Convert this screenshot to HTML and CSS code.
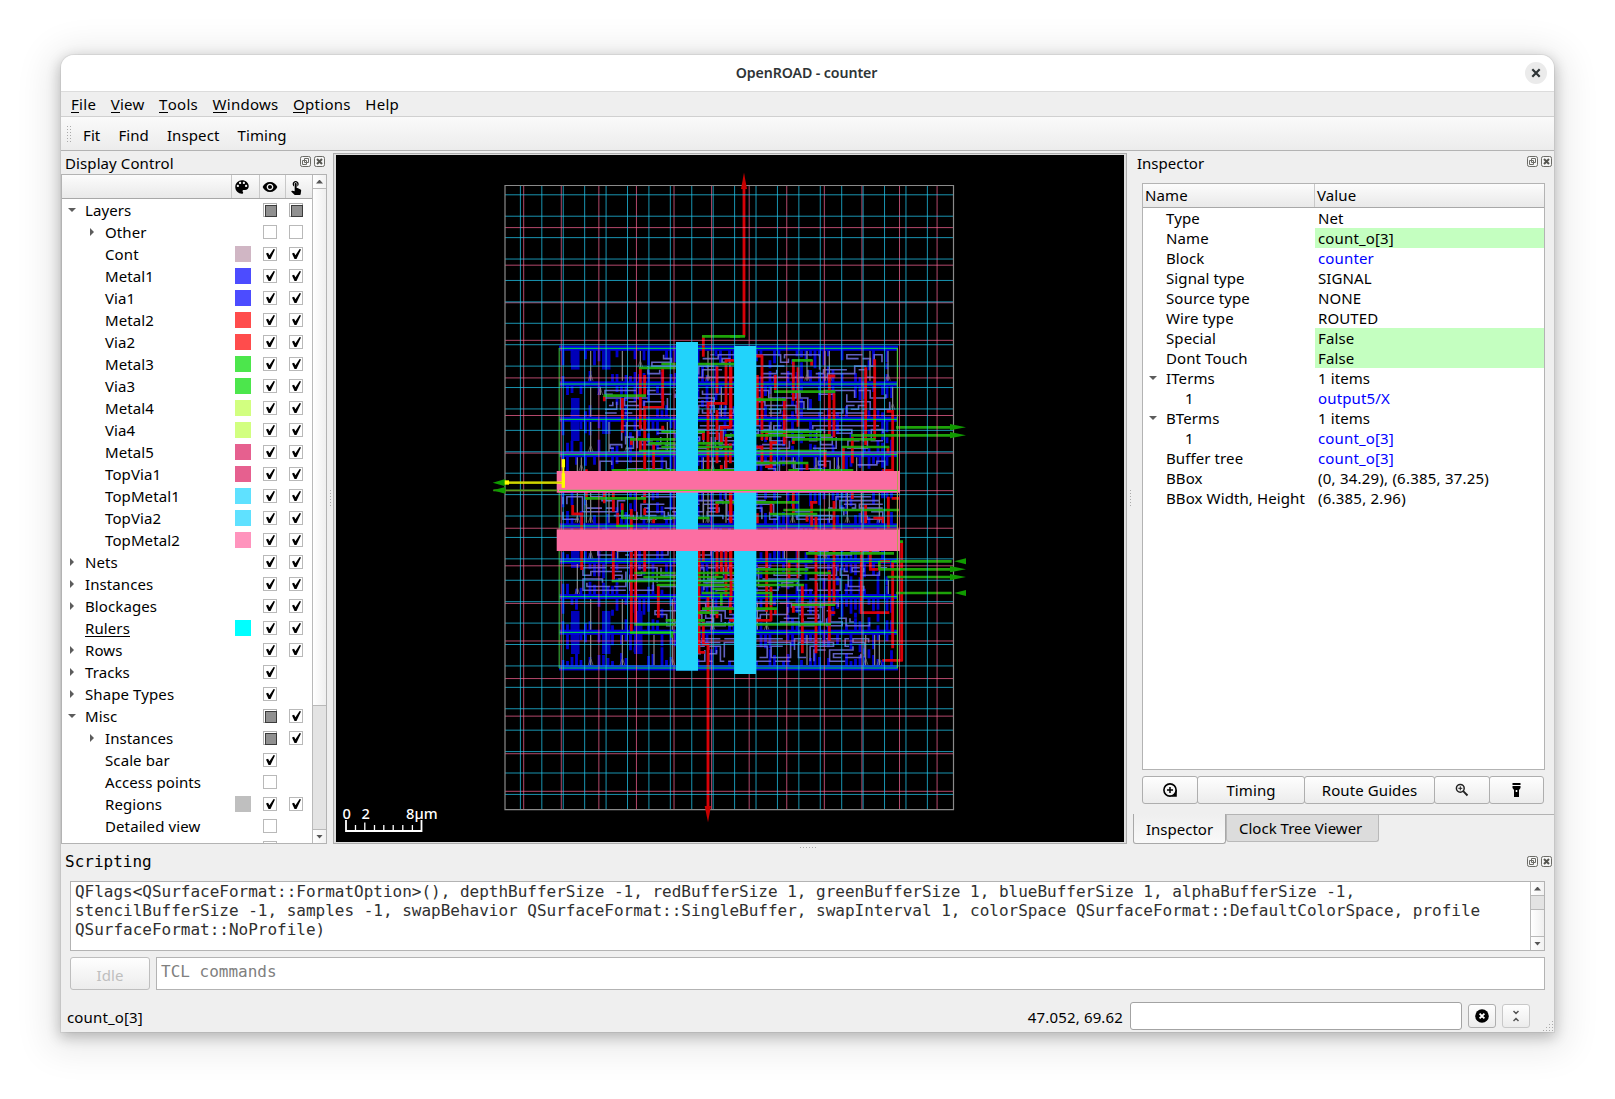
FILE: index.html
```html
<!DOCTYPE html>
<html lang="en">
<head>
<meta charset="utf-8">
<title>OpenROAD - counter</title>
<link rel="stylesheet" href="styles.css">
</head>
<body>
<svg class="defs" width="0" height="0">
  <symbol id="float" viewBox="0 0 11 11"><rect x=".5" y=".5" width="10" height="10" rx="1.8" fill="#f6f6f6" stroke="#6b6b66"/><path d="M4.5 2.5h4v4h-4zM2.5 4.5h4v4h-4z" fill="#f6f6f6" stroke="#6b6b66"/></symbol>
  <symbol id="shut" viewBox="0 0 11 11"><rect x=".5" y=".5" width="10" height="10" rx="1.8" fill="#f6f6f6" stroke="#6b6b66"/><path d="M3 3l5 5M8 3l-5 5" stroke="#55554f" stroke-width="2"/></symbol>
</svg>
<div class="window">
  <header class="titlebar"><span class="title">OpenROAD - counter</span>
    <span class="close"><svg width="10" height="10" viewBox="0 0 10 10"><path d="M1.3 1.3l7.4 7.4M8.7 1.3L1.3 8.7" stroke="#2e3436" stroke-width="2.2"/></svg></span>
  </header>
  <nav class="menubar"><span><u>F</u>ile</span><span><u>V</u>iew</span><span><u>T</u>ools</span><span><u>W</u>indows</span><span><u>O</u>ptions</span><span>Help</span></nav>
  <div class="toolbar"><i class="grip"></i><span>Fit</span><span>Find</span><span>Inspect</span><span>Timing</span></div>

  <main class="work">
    <section class="display">
      <div class="dock-title"><span>Display Control</span><svg><use href="#float"/></svg><svg><use href="#shut"/></svg></div>
      <div class="tree-box">
        <div class="tree">
          <div class="tree-head"><b></b>
            <b><svg width="18" height="18" viewBox="0 0 24 24"><path fill-rule="evenodd" d="M12 3c-4.97 0-9 4.03-9 9s4.03 9 9 9c.83 0 1.5-.67 1.5-1.5 0-.39-.15-.74-.39-1.01-.23-.26-.38-.61-.38-.99 0-.83.67-1.5 1.5-1.5H16c2.76 0 5-2.24 5-5 0-4.42-4.03-8-9-8zm-5.500 9c-.83 0-1.500-.67-1.500-1.500S5.670 9 6.500 9 8 9.670 8 10.500 7.330 12 6.500 12zm3-4C8.670 8 8 7.330 8 6.500S8.670 5 9.500 5s1.500.67 1.500 1.500S10.330 8 9.500 8zm5 0c-.83 0-1.500-.67-1.500-1.500S13.670 5 14.500 5s1.500.67 1.500 1.500S15.330 8 14.500 8zm3 4c-.83 0-1.500-.67-1.500-1.500S16.670 9 17.500 9s1.500.67 1.500 1.500-.67 1.500-1.500 1.500z"/></svg></b>
            <b><svg width="16" height="16" viewBox="0 0 24 24"><path d="M12 4.500C7 4.500 2.730 7.610 1 12c1.730 4.390 6 7.500 11 7.500s9.270-3.110 11-7.500c-1.730-4.390-6-7.500-11-7.500zM12 17c-2.760 0-5-2.240-5-5s2.240-5 5-5 5 2.240 5 5-2.240 5-5 5zm0-8c-1.660 0-3 1.340-3 3s1.340 3 3 3 3-1.340 3-3-1.340-3-3-3z"/></svg></b>
            <b><svg width="16" height="16" viewBox="0 0 24 24"><path d="M9 11.240V7.500C9 6.120 10.120 5 11.500 5S14 6.120 14 7.500v3.740c1.210-.81 2-2.180 2-3.740C16 5.010 13.990 3 11.500 3S7 5.010 7 7.500c0 1.560.79 2.930 2 3.740zm9.840 4.630l-4.540-2.260c-.17-.07-.35-.11-.54-.11H13v-6c0-.83-.67-1.500-1.500-1.500S10 6.670 10 7.500v10.740l-3.430-.72c-.08-.01-.15-.03-.24-.03-.31 0-.59.13-.79.33l-.79.8 4.940 4.940c.27.27.65.44 1.060.44h6.790c.75 0 1.330-.55 1.440-1.280l.75-5.270c.01-.07.02-.14.02-.2 0-.62-.38-1.160-.91-1.380z"/></svg></b>
          </div>
          <div class="row open"><span>Layers</span><i></i><em class="mid"></em><em class="mid"></em></div>
          <div class="row sub shut"><span>Other</span><i></i><em></em><em></em></div>
          <div class="row sub"><span>Cont</span><i class="cont"></i><em class="on"></em><em class="on"></em></div>
          <div class="row sub"><span>Metal1</span><i class="m1"></i><em class="on"></em><em class="on"></em></div>
          <div class="row sub"><span>Via1</span><i class="m1"></i><em class="on"></em><em class="on"></em></div>
          <div class="row sub"><span>Metal2</span><i class="m2"></i><em class="on"></em><em class="on"></em></div>
          <div class="row sub"><span>Via2</span><i class="m2"></i><em class="on"></em><em class="on"></em></div>
          <div class="row sub"><span>Metal3</span><i class="m3"></i><em class="on"></em><em class="on"></em></div>
          <div class="row sub"><span>Via3</span><i class="m3"></i><em class="on"></em><em class="on"></em></div>
          <div class="row sub"><span>Metal4</span><i class="m4"></i><em class="on"></em><em class="on"></em></div>
          <div class="row sub"><span>Via4</span><i class="m4"></i><em class="on"></em><em class="on"></em></div>
          <div class="row sub"><span>Metal5</span><i class="m5"></i><em class="on"></em><em class="on"></em></div>
          <div class="row sub"><span>TopVia1</span><i class="m5"></i><em class="on"></em><em class="on"></em></div>
          <div class="row sub"><span>TopMetal1</span><i class="tm1"></i><em class="on"></em><em class="on"></em></div>
          <div class="row sub"><span>TopVia2</span><i class="tm1"></i><em class="on"></em><em class="on"></em></div>
          <div class="row sub"><span>TopMetal2</span><i class="tm2"></i><em class="on"></em><em class="on"></em></div>
          <div class="row shut"><span>Nets</span><i></i><em class="on"></em><em class="on"></em></div>
          <div class="row shut"><span>Instances</span><i></i><em class="on"></em><em class="on"></em></div>
          <div class="row shut"><span>Blockages</span><i></i><em class="on"></em><em class="on"></em></div>
          <div class="row"><span><u>Rulers</u></span><i class="ruler"></i><em class="on"></em><em class="on"></em></div>
          <div class="row shut"><span>Rows</span><i></i><em class="on"></em><em class="on"></em></div>
          <div class="row shut"><span>Tracks</span><i></i><em class="on"></em></div>
          <div class="row shut"><span>Shape Types</span><i></i><em class="on"></em></div>
          <div class="row open"><span>Misc</span><i></i><em class="mid"></em><em class="on"></em></div>
          <div class="row sub shut"><span>Instances</span><i></i><em class="mid"></em><em class="on"></em></div>
          <div class="row sub"><span>Scale bar</span><i></i><em class="on"></em></div>
          <div class="row sub"><span>Access points</span><i></i><em></em></div>
          <div class="row sub"><span>Regions</span><i class="region"></i><em class="on"></em><em class="on"></em></div>
          <div class="row sub"><span>Detailed view</span><i></i><em></em></div>
          <div class="row sub"><span>Highlight sel…</span><i></i><em class="on"></em></div>
        </div>
        <div class="scroll"><b class="up"></b><div class="thumb tall"></div><div class="track"></div><b class="down"></b></div>
      </div>
    </section>

    <div class="vsplit"><i class="dots-v"></i></div>

    <section class="layout">
      <svg id="chip" width="788" height="687" viewBox="336 155 788 687"></svg>
    </section>

    <div class="vsplit wide"><i class="dots-v"></i></div>

    <section class="inspector">
      <div class="dock-title"><span>Inspector</span><svg><use href="#float"/></svg><svg><use href="#shut"/></svg></div>
      <div class="props">
        <div class="props-head"><span>Name</span><span>Value</span></div>
        <div class="prop"><span>Type</span><span>Net</span></div>
        <div class="prop"><span>Name</span><span class="edit">count_o[3]</span></div>
        <div class="prop"><span>Block</span><span class="link">counter</span></div>
        <div class="prop"><span>Signal type</span><span>SIGNAL</span></div>
        <div class="prop"><span>Source type</span><span>NONE</span></div>
        <div class="prop"><span>Wire type</span><span>ROUTED</span></div>
        <div class="prop"><span>Special</span><span class="edit">False</span></div>
        <div class="prop"><span>Dont Touch</span><span class="edit">False</span></div>
        <div class="prop open"><span>ITerms</span><span>1 items</span></div>
        <div class="prop nested"><span>1</span><span class="link">output5/X</span></div>
        <div class="prop open"><span>BTerms</span><span>1 items</span></div>
        <div class="prop nested"><span>1</span><span class="link">count_o[3]</span></div>
        <div class="prop"><span>Buffer tree</span><span class="link">count_o[3]</span></div>
        <div class="prop"><span>BBox</span><span class="num">(0, 34.29), (6.385, 37.25)</span></div>
        <div class="prop"><span>BBox Width, Height</span><span class="num">(6.385, 2.96)</span></div>
      </div>
      <div class="actions">
        <button class="w56"><svg width="16" height="16" viewBox="0 0 16 16"><circle cx="8" cy="8" r="6.100" fill="none" stroke="#000" stroke-width="1.600"/><path d="M8 5v6M5 8h6" stroke="#000" stroke-width="1.500"/><path d="M14.800 8v6.800H8c3.500 0 6-3 6-6.800z"/></svg></button>
        <button class="w108">Timing</button>
        <button class="w131">Route Guides</button>
        <button class="w56"><svg width="16" height="16" viewBox="0 0 16 16" fill="none" stroke="#222"><circle cx="6.300" cy="6.300" r="3.900" stroke-width="1.500"/><path d="M9.200 9.200l4.300 4.300" stroke-width="1.900"/><path d="M6.300 4.300v4M4.300 6.300h4"/></svg></button>
        <button class="w55"><svg width="16" height="16" viewBox="0 0 16 16"><path d="M3.500 1h8v2h-8zM3.500 4h8v2L10 8v7H5V8L3.500 6z"/><path d="M6.700 8h1.600v2H6.700z" fill="#fff"/></svg></button>
      </div>
      <div class="tabs"><span class="tab current">Inspector</span><span class="tab">Clock Tree Viewer</span></div>
    </section>
  </main>

  <div class="hsplit"><i class="dots-h"></i></div>

  <section class="scripting">
    <div class="dock-title mono"><span>Scripting</span><svg><use href="#float"/></svg><svg><use href="#shut"/></svg></div>
    <div class="log">
      <pre>QFlags&lt;QSurfaceFormat::FormatOption&gt;(), depthBufferSize -1, redBufferSize 1, greenBufferSize 1, blueBufferSize 1, alphaBufferSize -1,
stencilBufferSize -1, samples -1, swapBehavior QSurfaceFormat::SingleBuffer, swapInterval 1, colorSpace QSurfaceFormat::DefaultColorSpace, profile
QSurfaceFormat::NoProfile)</pre>
      <div class="scroll"><b class="up"></b><div class="track small"></div><div class="thumb"></div><b class="down"></b></div>
    </div>
    <div class="command"><button class="idle" disabled>Idle</button><div class="tcl">TCL commands</div></div>
  </section>

  <footer class="status">
    <span class="picked">count_o[3]</span><span class="coords">47.052, 69.62</span>
    <div class="field"></div>
    <button><svg width="14" height="14" viewBox="0 0 14 14"><circle cx="7" cy="7" r="6.800"/><path d="M4.600 4.600l4.800 4.800M9.400 4.600L4.600 9.400" stroke="#fff" stroke-width="1.800"/></svg></button>
    <button class="dim"><svg width="8" height="12" viewBox="0 0 8 12"><path d="M1.500 1L4 3.500 6.500 1M1.500 11L4 8.500 6.500 11" fill="none" stroke="#555" stroke-width="1.500"/></svg></button>
    <i class="sizegrip"></i>
  </footer>
</div>
<script src="chip.js"></script>
</body>
</html>
```
FILE: styles.css
```css
* { box-sizing: border-box; }
body { margin: 0; width: 1615px; height: 1099px; overflow: hidden; background: #fff; color: #000; font: 15px/20px "Noto Sans", sans-serif; letter-spacing: .1px; }
.defs { display: block; height: 0; }
u { text-decoration: none; border-bottom: 1px solid #000; display: inline-block; line-height: 16px; }
i, em { font-style: normal; }

.window { width: 1493px; height: 977px; margin: 55px 0 0 61px; background: #efefef; border-radius: 13px 13px 0 0; display: flex; flex-direction: column; box-shadow: 0 0 0 1px rgba(0,0,0,.05), 0 4px 14px 1px rgba(0,0,0,.24), 0 6px 36px 12px rgba(0,0,0,.09); }
.titlebar { height: 37px; flex: none; background: #fff; border-bottom: 1px solid #dcdcdc; border-radius: 13px 13px 0 0; display: flex; align-items: center; padding: 0 7px 0 27px; }
.title { flex: 1; text-align: center; font-weight: 600; font-size: 14.200px; letter-spacing: -.1px; color: #2e3436; padding-bottom: 1px; }
.close { width: 22px; height: 22px; border-radius: 50%; background: #ebebeb; display: grid; place-items: center; }
.menubar { height: 25px; flex: none; border-bottom: 1px solid #d0d0d0; display: flex; gap: 14.500px; padding: 2px 0 0 10px; letter-spacing: .28px; }
.toolbar { height: 34px; flex: none; border-bottom: 1px solid #b3b3b3; background: linear-gradient(#fafafa, #ececec); display: flex; align-items: center; gap: 18px; padding: 3px 0 0 5px; }
.grip { width: 5px; height: 17px; margin: -4px -6px 0 0; background: radial-gradient(circle, #aaa 0.700px, transparent 1px) 0 0 / 3px 3px; }

.work { height: 693px; flex: none; display: flex; align-items: flex-start; }
.display { width: 266px; }
.dock-title { display: flex; align-items: center; height: 23px; padding: 1px 5px 0 4px; gap: 3px; }
.dock-title span { flex: 1; }
.dock-title svg { width: 11px; height: 11px; margin-top: -3px; }
.display .dock-title { padding-right: 2px; }
.tree-box { height: 670px; border: 1px solid #b3b3b3; background: #fff; display: flex; overflow: hidden; }
.tree { flex: 1; overflow: hidden; }
.tree-head { height: 24px; border-bottom: 1px solid #a8a8a8; background: linear-gradient(#fcfcfc, #e9e9e9); display: grid; grid-template-columns: 170px 28px 26px 26px; }
.tree-head b { border-right: 1px solid #c8c8c8; display: grid; align-items: center; overflow: hidden; padding-left: 1px; }
.tree-head b:nth-child(3) { padding-left: 2px; }
.tree-head b:nth-child(4) { border-right: 0; padding: 1px 0 0 2px; }
.row { height: 22px; display: grid; grid-template-columns: 173px 28px 26px 20px; grid-template-rows: 22px; align-items: center; }
.row span { position: relative; padding-left: 23px; line-height: 22px; height: 22px; white-space: nowrap; }
.row.sub span { padding-left: 43px; }
.row span::before, .prop span:first-child::before { content: ""; position: absolute; width: 8px; height: 8px; }
.row.open span::before { left: 6px; top: 7px; }
.row.shut span::before { left: 8px; top: 7px; height: 8px; width: 4px; background: #5c5c5c; clip-path: polygon(0 0, 100% 50%, 0 100%); }
.row.sub.shut span::before { left: 28px; }
.row.open span::before, .prop.open span:first-child::before { height: 4px; margin-top: 2px; background: #5c5c5c; clip-path: polygon(0 0, 100% 0, 50% 100%); }
.row i { width: 16px; height: 16px; }
.row em { width: 14px; height: 14px; border: 1px solid #b9b9b9; position: relative; background: #fff; }
.row em.on::after { content: ""; position: absolute; left: 2px; top: 1px; width: 9px; height: 10px; background: #000; clip-path: polygon(0 45%, 23% 38%, 38% 62%, 85% 0, 100% 6%, 50% 100%, 28% 100%); }
.row em.mid { border-color: #b0b0b0; }
.row em.mid::after { content: ""; position: absolute; left: 1px; top: 1px; width: 10px; height: 10px; border: 1px solid #3c3c3c; background: #909090; }
.cont { background: #d0b6c4; } .m1 { background: #4c4cff; } .m2 { background: #ff4c4c; } .m3 { background: #4ce64c; }
.m4 { background: #d2ff80; } .m5 { background: #e6608f; } .tm1 { background: #5fe1ff; } .tm2 { background: #ff94bd; }
.ruler { background: #0ff; } .region { background: #bfbfbf; }

.scroll { width: 14px; flex: none; border-left: 1px solid #b9b9b9; display: flex; flex-direction: column; background: #fcfcfc; }
.scroll b { height: 13px; flex: none; display: grid; place-items: center; background: linear-gradient(90deg, #fff, #f2f2f2); }
.scroll b::after { content: ""; width: 7px; height: 4px; background: #555; clip-path: polygon(50% 0, 100% 100%, 0 100%); }
.scroll .down::after { clip-path: polygon(0 0, 100% 0, 50% 100%); }
.thumb { flex: 1; border: solid #b9b9b9; border-width: 1px 0; background: linear-gradient(90deg, #fff, #efefef); }
.thumb.tall { flex: none; height: 518px; }
.track { flex: 1; background: #e3e3e3; border-bottom: 1px solid #b9b9b9; }
.track.small { flex: none; height: 14px; border: 0; border-top: 1px solid #b9b9b9; }

.vsplit { width: 6px; height: 693px; display: grid; place-items: center; padding-left: 1px; }
.vsplit.wide { width: 6px; }
.dots-v { width: 3px; height: 17px; background: radial-gradient(circle, #aaa 0.700px, transparent 1px) 0 0 / 3px 3px; }
.layout { width: 794px; height: 691px; margin-top: 2px; border: 1px solid #adadad; padding: 1px 1px 0 2px; background: #dedede; }
.layout svg { display: block; background: #000; }
.scale-label { fill: #fff; font-weight: 500; font-size: 14.670px; }

.inspector { width: 421px; display: flex; flex-direction: column; }
.inspector .dock-title { padding: 1px 2px 0 4px; letter-spacing: 0; }
.props { margin: 9px 9px 0 9px; height: 587px; border: 1px solid #b3b3b3; background: #fff; }
.props-head { height: 24px; border-bottom: 1px solid #a8a8a8; background: linear-gradient(#fcfcfc, #e9e9e9); display: grid; grid-template-columns: 172px 1fr; }
.props-head span { padding: 1px 0 0 2px; }
.props-head span:first-child { border-right: 1px solid #c8c8c8; }
.prop { height: 20px; display: grid; grid-template-columns: 172px 1fr; white-space: nowrap; }
.prop span { padding-left: 3px; position: relative; line-height: 20px; height: 20px; }
.prop span:first-child { padding-left: 23px; }
.prop.nested span:first-child { padding-left: 42px; }
.prop.open span:first-child::before { left: 6px; top: 6px; }
.prop .num { letter-spacing: .22px; }
.prop .edit { background: #c4ffc0; }
.prop .link { color: #00f; }
.prop .link, .prop .edit { letter-spacing: .15px; }
button { font: inherit; letter-spacing: inherit; color: #000; background: linear-gradient(#fefefe, #ececec); border: 1px solid #aeaeae; border-radius: 3px; padding: 0; display: grid; place-items: center; }
.actions { display: flex; margin: 6px 0 0 9px; }
.actions button { height: 28px; margin-right: -1px; }
.w56 { width: 56px; } .w108 { width: 108px; } .w131 { width: 131px; } .w55 { width: 55px; }
.tabs { display: flex; align-items: flex-start; margin-top: 10px; border-top: 1px solid #b3b3b3; height: 32px; letter-spacing: 0; }
.tab { height: 27px; padding: 3px 12px 0; border: 1px solid #b9b9b9; border-top: 0; border-radius: 0 0 3px 3px; background: #dcdcdc; white-space: nowrap; width: 153px; }
.tab.current { height: 30px; margin-top: -1px; padding-top: 5px; background: linear-gradient(#efefef, #f9f9f9); width: 93px; border-color: #a8a8a8; }

.hsplit { height: 6px; flex: none; display: grid; place-items: center; }
.dots-h { width: 18px; height: 3px; background: radial-gradient(circle, #aaa 0.700px, transparent 1px) 0 0 / 3px 3px; }
.scripting { flex: none; font-size: 16px; }
.mono, .log, .tcl { font-family: "DejaVu Sans Mono", monospace; font-size: 16px; letter-spacing: 0; }
.scripting .dock-title { height: 31px; padding: 0 2px 7px 4px; }
.scripting .dock-title svg { margin-top: -2px; }
.log { margin: 0 9px; height: 70px; border: 1px solid #b3b3b3; background: #fff; display: flex; color: #303030; }
.log pre { flex: 1; margin: 0; padding: 0 0 0 4px; font: inherit; letter-spacing: -.008px; line-height: 19px; overflow: hidden; }
.command { display: flex; gap: 6px; margin: 6px 9px 0; height: 33px; }
.idle { width: 80px; color: #bebebe; border-color: #bebebe; font-size: 15px; padding-top: 2px; }
.tcl { flex: 1; border: 1px solid #b3b3b3; background: #fff; color: #808080; padding: 4px; }
.status { flex: 1; display: flex; align-items: flex-end; padding: 0 1px 2px 6px; }
.picked { flex: 1; }
.picked, .coords { margin-bottom: 3px; letter-spacing: .15px; }
.field { width: 332px; height: 28px; margin-left: 7px; border: 1px solid #a3a3a3; border-radius: 3px; background: #fff; }
.status button { width: 28px; height: 24px; margin: 0 0 2px 6px; }
.status .dim { border-color: #c8c8c8; }
.sizegrip { width: 11px; height: 11px; margin: 0 0 -1px 12px; background: radial-gradient(circle, #aaa 0.700px, transparent 1px) 0 0 / 3px 3px; clip-path: polygon(100% 0, 100% 100%, 0 100%); }
```
FILE: chip.js
```js
// Draws the routed die. Detail shapes are listed per quadrant in third-of-a-pixel units.
const out = [];
const seg = (d, color, w, extra = '') => out.push(`<path d="${d}" fill="none" stroke="${color}" stroke-width="${w}" ${extra}/>`);
const box = (x, y, w, h, c, extra = '') => out.push(`<rect x="${x}" y="${y}" width="${w}" height="${h}" fill="${c}" ${extra}/>`);

let seed = 7;
const rnd = () => (seed = (seed * 16807) % 2147483647) / 2147483647;
const pick = (a, b) => a + Math.floor(rnd() * (b - a + 1));

const rails = [348.3, 384, 419.3, 454.7, 490.3, 526, 561.3, 596.7, 632.3, 668];

// metal1 stubs hanging off the power rails
let stubs = '';
rails.slice(0, 9).forEach((y, r) => {
  for (let x = 563; x < 895; x += 4.5) {
    if (rnd() < 0.5) stubs += `M${x} ${y + 2}v${pick(6, 15)}`;
    if (rnd() < 0.5) stubs += `M${x} ${rails[r + 1] - 2}v-${pick(5, 13)}`;
    if (x > 610 && rnd() < 0.25) stubs += `M${x} ${y + pick(10, 18)}v${pick(5, 11)}`;
  }
});
seg(stubs, '#0000cc', 2.8);

// filler cells
[[571, 350.6, 19], [602, 350.6, 19], [571, 398, 43], [602, 420, 14], [571, 551, 17], [571, 611, 43], [602, 611, 43], [634, 611, 43]]
  .forEach(([x, y, h]) => box(x, y, 8.5, h, '#0000b8'));

// local interconnect: wandering wires that stop before touching one another
const zones = [[648, 890, 26], [605, 890, 60], [610, 885, 48], [600, 885, 40], [563, 885, 40], [590, 880, 20], [583, 888, 55], [655, 870, 45], [697, 890, 34]];
let local = '';
zones.forEach(([x1, x2, n], r) => {
  const used = new Set(), top = rails[r] + 6.5, lines = 7, cols = Math.floor((x2 - x1) / 3.9);
  for (let k = 0; k < n; k++) {
    let c = pick(0, cols), t = pick(0, lines - 1);
    if (used.has(c + ',' + t)) continue;
    let d = '', horizontal = rnd() < 0.6;
    const mine = [c + ',' + t];
    for (let s = 0; s < 6; s++) {
      const dir = rnd() < 0.5 ? -1 : 1, len = horizontal ? pick(2, 9) : pick(1, 4);
      let moved = false;
      for (let q = 0; q < len; q++) {
        const nc = c + (horizontal ? dir : 0), nt = t + (horizontal ? 0 : dir), key = nc + ',' + nt;
        if (nc < 0 || nc > cols || nt < 0 || nt >= lines || used.has(key) || mine.includes(key)) break;
        c = nc; t = nt; moved = true;
        mine.push(key);
      }
      if (moved) d += `L${(x1 + c * 3.9).toFixed(1)} ${(top + t * 3.75).toFixed(1)}`;
      horizontal = !horizontal;
    }
    if (d) {
      const [sc, st] = mine[0].split(',').map(Number);
      local += `M${(x1 + sc * 3.9).toFixed(1)} ${(top + st * 3.75).toFixed(1)}${d}`;
    }
    mine.forEach(m => used.add(m));
  }
});
seg(local, '#6e6edc', 1.6, 'opacity=".88"');

const quads = {
  a: { at: [490, 160],
    grey: [[302,572,662],[302,680,770],[302,786,876],[397,572,662],[451,572,622],[357,786,876],[411,786,876],[532,786,876],[331,680,705],[262,892,933],[274,892,933],[640,892,933],[654,572,662],[694,680,770],[668,892,933]],
    redV: [[343,708,724],[397,714,818],[451,622,806],[451,840,875],[464,645,710],[464,740,930],[518,625,745],[640,528,590],[654,730,930],[708,600,735],[681,618,700],[681,750,840],[721,620,800],[694,800,850],[640,815,840],[424,838,855],[491,850,930],[518,797,812],[708,830,925],[681,860,910],[721,850,910],[694,915,933],[289,928,1020],[343,1000,1020]],
    redH: [[460,522,742],[650,712,730],[704,732,601],[690,725,802]],
    green: [[636,750,529],[447,557,624],[514,557,612],[624,732,612],[340,468,707],[514,557,815],[624,645,815],[420,557,838],[705,732,826],[475,557,850],[624,700,850],[514,557,861],[624,727,861],[447,557,873],[624,732,873],[365,557,931],[624,732,931]], greenV: [] },
  b: { at: [730, 160],
    grey: [[231,572,662],[285,572,662],[298,572,662],[420,572,662],[474,572,662],[123,680,870],[488,680,750],[313,892,933],[325,892,933],[380,892,933],[258,892,933],[190,892,933]],
    redV: [[42,80,530],[3,620,800],[82,645,795],[96,588,840],[136,645,690],[190,600,722],[204,622,800],[245,600,617],[298,645,830],[312,700,832],[163,720,852],[407,622,855],[434,598,838],[488,750,933],[110,815,840],[96,860,910],[123,845,922],[285,870,922],[340,860,930],[367,830,910],[474,860,878],[190,838,852],[231,912,930]],
    redH: [[78,100,588],[294,316,648],[470,492,754],[118,141,848],[78,100,861],[105,128,920],[457,490,931]],
    green: [[0,45,529],[186,248,601],[0,12,612],[132,316,695],[78,168,719],[92,275,815],[78,303,826],[186,437,838],[335,478,861],[78,290,873],[78,235,909],[175,207,931],[240,370,931],[363,665,826],[498,665,802]], greenV: [] },
  c: { at: [490, 490],
    grey: [[262,8,98],[289,8,98],[302,8,98],[357,8,98],[478,8,98],[640,8,98],[654,8,98],[708,8,98],[302,183,206],[383,183,206],[262,222,313],[302,327,420],[302,434,525],[397,327,420],[397,434,525],[547,327,420],[547,434,525],[492,434,525],[668,327,420]],
    redV: [[248,45,75],[275,70,240],[370,8,65],[370,183,275],[397,40,60],[383,68,110],[424,57,125],[424,186,425],[437,183,403],[464,8,40],[464,55,75],[464,183,245],[491,85,100],[343,8,40],[505,285,383],[640,183,215],[640,395,465],[627,183,490],[654,460,952],[681,35,70],[681,183,260],[681,365,385],[694,183,250],[721,8,95],[721,183,250],[721,320,370],[708,183,320],[654,320,370]],
    redH: [[245,280,72],[625,645,487],[636,658,463],[717,732,391]],
    green: [[285,468,25],[394,557,84],[378,430,108],[624,658,84],[676,732,37],[433,557,249],[624,732,249],[460,557,261],[624,700,261],[365,557,273],[624,732,273],[500,557,285],[624,732,285],[665,732,297],[635,727,309],[636,732,356],[624,685,368],[433,557,403],[624,732,403],[527,557,391],[624,645,391],[420,550,428]], greenV: [[397,60,86],[694,305,347],[545,426,443]] },
  d: { at: [730, 490],
    grey: [[188,8,98],[298,8,98],[352,8,98],[394,8,98],[448,8,98],[163,183,206],[285,183,206],[82,340,420],[110,340,420],[231,434,525],[407,434,525],[434,434,525],[448,434,525],[475,270,313]],
    redV: [[3,8,100],[3,183,330],[190,8,70],[123,40,70],[231,70,95],[245,35,110],[258,80,490],[312,33,345],[367,8,27],[407,45,100],[460,80,100],[475,20,115],[82,70,100],[110,183,365],[177,215,265],[204,183,265],[298,240,452],[217,285,490],[394,183,368],[421,183,240],[488,215,475],[515,155,514],[123,290,392],[190,345,368],[136,360,372]],
    redH: [[240,262,37],[430,460,84],[485,507,25],[390,478,368],[417,445,238],[457,518,511],[78,125,391],[295,316,368],[450,480,214]],
    green: [[78,207,37],[160,507,60],[120,262,72],[228,492,190],[173,248,214],[78,235,238],[78,303,249],[78,207,273],[78,222,285],[78,125,309],[186,316,344],[78,141,356],[78,303,403],[510,519,155],[485,665,214],[447,665,238],[472,665,261],[498,665,309]], greenV: [[123,305,345],[448,212,240]] }
};
const group = (q, fn) => { out.push(`<g transform="translate(${q.at}) scale(.33333)">`); fn(); out.push('</g>'); };
const vs = list => list.map(([x, a, b]) => `M${x} ${a}V${b}`).join('');
const hs = list => list.map(([a, b, y]) => `M${a} ${y}H${b}`).join('');
const all = Object.values(quads);

all.forEach(q => group(q, () => {
  seg(vs(q.grey), '#8c8c90', 3.5);
  seg(q.grey.filter((g, i) => i % 2 === 0).map(([x, , b]) => `M${x - 7} ${b}l6 -18M${x + 7} ${b}l-6 -18`).join(''), '#77777c', 2);
}));

rails.forEach(y => box(559, y - 2.6, 339, 5, '#0000e6'));
all.forEach(q => group(q, () => {
  seg(vs(q.redV) + hs(q.redH), '#e80008', 8.5, 'opacity=".93"');
  seg(hs(q.green) + vs(q.greenV), '#1fae0a', 8, 'opacity=".93"');
}));
rails.forEach(y => box(559, y - 0.5, 339, 1, '#00f030'));
box(558.6, 348, 1.2, 320, '#35a335');
box(896.8, 348, 1.2, 320, '#48c03a');

// routing tracks over the die area
const cy = [], py = [], cx = [], px = [];
for (let i = 0; i < 20; i++) cx.push(520.4 + i * 21.42);
for (let i = 0; i < 29; i++) cy.push(194.8 + i * 21.415);
for (let i = 0; i < 12; i++) px.push(523.7 + i * 37.58);
for (let i = 0; i < 16; i++) py.push(227.6 + i * 37.58);
seg(px.map(x => `M${x} 185V810`).join('') + py.map(y => `M505 ${y}H954`).join(''), '#ff6699', 1, 'opacity=".7"');
seg(cx.map(x => `M${x} 185V810`).join('') + cy.map(y => `M505 ${y}H954`).join(''), '#22ccf4', 1, 'opacity=".72"');
seg('M505 185.5H953.500V809.700H505Z', '#8a8a8a', 1.2);

// power straps
box(676, 342, 22, 328.7, '#22d3fb');
box(734.2, 346, 21.8, 328, '#22d3fb');
box(556.7, 471, 343.3, 21.7, '#fc6ea2');
box(556.7, 529.3, 343.3, 21.7, '#fc6ea2');
box(559, 489.8, 339, 1.2, '#30f028');
box(897, 471, 1, 80, '#b7a050');

// pins
group(quads.a, () => {
  seg('M10 991H202', '#5a9a20', 5);
  out.push('<path d="M8 968L46 957V979ZM8 991L46 981V1001Z" fill="#109a00"/>');
  seg('M50 968H220', '#ff0', 7); seg('M56 968H216', '#8a9a00', 1.5);
  seg('M220 898V983', '#ff0', 6); seg('M220 898V922M220 940V983', '#ff0', 10); seg('M44 967.500H57', '#ff0', 13);
});
group(quads.b, () => out.push('<path d="M42 38L33 87H51Z" fill="#c80000"/><path d="M660 792L708 802L660 811ZM660 816L708 826L660 835Z" fill="#109a00"/>'));
group(quads.c, () => out.push('<path d="M654 997L644 948H663Z" fill="#c80000"/>'));
group(quads.d, () => out.push('<path d="M672 214L708 205V223ZM708 300V318L672 309ZM660 228L708 238L660 247ZM660 252L708 261L660 271Z" fill="#109a00"/>'));

// scale bar
seg('M346 820V831H421.500V820', '#fff', 1.8);
seg('M355.500 825V831M364.800 822.500V831M374.500 825V831M383.800 825V831M393.200 825V831M402.800 825V831M412.400 825V831', '#fff', 1.3);
out.push('<text class="scale-label" x="342.400" y="819">0</text><text class="scale-label" x="361.500" y="819">2</text><text class="scale-label" x="406" y="819">8µm</text>');

document.getElementById('chip').innerHTML = out.join('');
```
